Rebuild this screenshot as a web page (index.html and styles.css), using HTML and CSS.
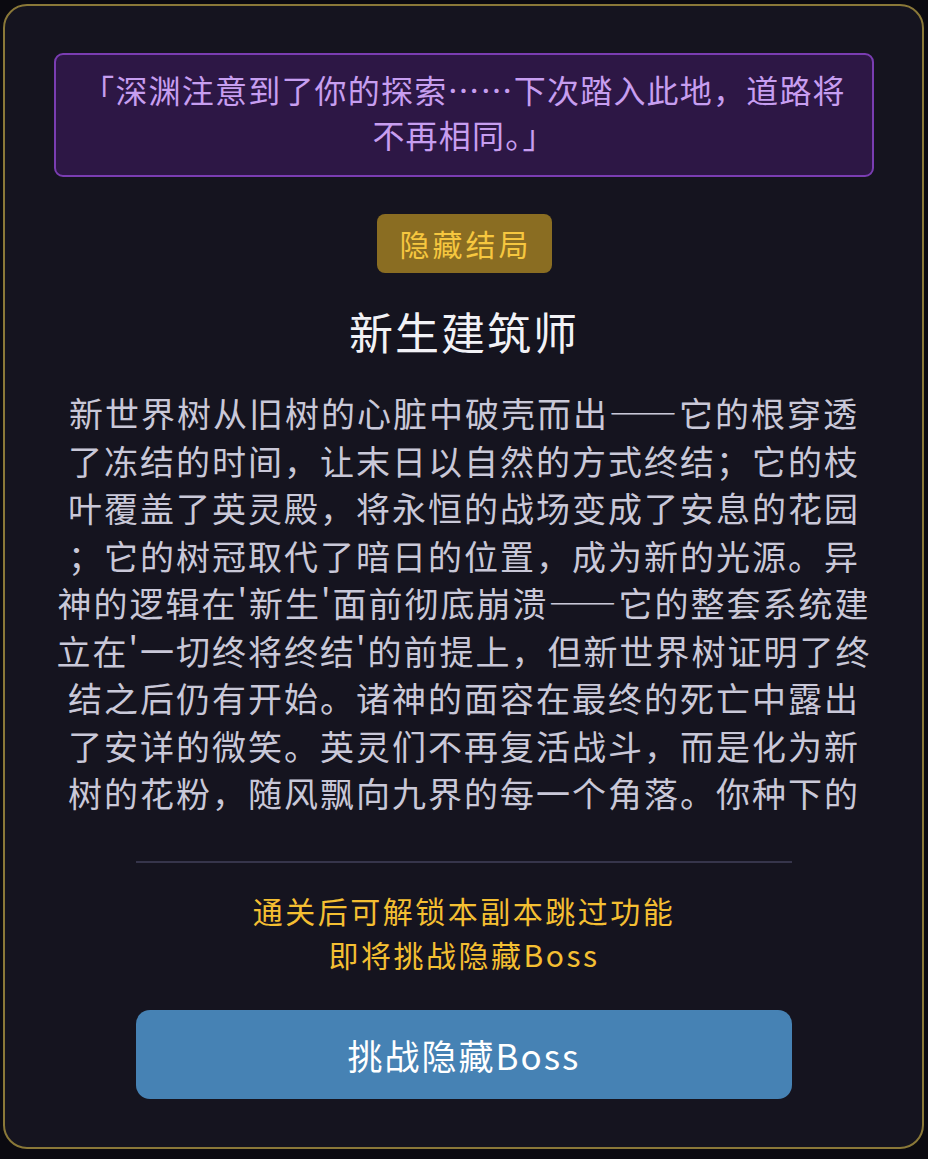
FILE: index.html
```html
<!DOCTYPE html>
<html lang="zh-CN">
<head>
  <meta charset="UTF-8">
  <title>隐藏结局 - 新生建筑师</title>
  <link rel="stylesheet" href="styles.css">
</head>
<body>
  <div class="modal">
    <div class="whisper">「深渊注意到了你的探索……下次踏入此地，道路将不再相同。」</div>

    <div class="badge">隐藏结局</div>
    <h2 class="ending-title">新生建筑师</h2>

    <div class="ending-text">新世界树从旧树的心脏中破壳而出——它的根穿透了冻结的时间，让末日以自然的方式终结；它的枝叶覆盖了英灵殿，将永恒的战场变成了安息的花园；它的树冠取代了暗日的位置，成为新的光源。异神的逻辑在'新生'面前彻底崩溃——它的整套系统建立在'一切终将终结'的前提上，但新世界树证明了终结之后仍有开始。诸神的面容在最终的死亡中露出了安详的微笑。英灵们不再复活战斗，而是化为新树的花粉，随风飘向九界的每一个角落。你种下的种子，终于长成了一个新的世界。</div>

    <hr class="divider">

    <div class="notice">
      <p>通关后可解锁本副本跳过功能</p>
      <p>即将挑战隐藏Boss</p>
    </div>

    <button class="btn-boss">挑战隐藏Boss</button>
  </div>
</body>
</html>
```

FILE: styles.css
```css
body {
  margin: 0;
  background: #0b0a10;
  font-family: "Noto Sans CJK SC", "Noto Sans", sans-serif;
}

.modal {
  box-sizing: border-box;
  height: 1145px;
  margin: 4px 4px 0 3px;
  padding: 47px 48px 0 49px;
  background: #15141f;
  border: 2px solid #8a7838;
  border-radius: 24px;
  display: flex;
  flex-direction: column;
  align-items: center;
}

.whisper {
  box-sizing: border-box;
  width: 100%;
  padding: 12px 24px 18px;
  background: #2d1745;
  border: 2px solid #7a3db2;
  border-radius: 9px;
  color: #c79ef0;
  font-size: 32px;
  letter-spacing: 1.2px;
  line-height: 45px;
  text-align: center;
}

.badge {
  margin-top: 37px;
  padding: 9px 20px 10px 23px;
  background: #8a6d22;
  color: #f6c73f;
  border-radius: 8px;
  font-size: 30px;
  letter-spacing: 3px;
  line-height: 40px;
}

.ending-title {
  margin: 27px 0 0;
  color: #f2f2f6;
  font-size: 44px;
  font-weight: normal;
  letter-spacing: 2px;
  line-height: 62px;
}

.ending-text {
  width: 100%;
  max-height: 428px;
  overflow: hidden;
  margin-top: 27px;
  color: #c9c8d8;
  font-size: 34px;
  letter-spacing: 2px;
  line-height: 47.5px;
  line-break: anywhere;
  text-align: center;
}

.divider {
  width: 80%;
  margin: 44px 0 0;
  border: none;
  border-top: 2px solid #36354b;
}

.notice {
  margin-top: 25px;
  color: #f4bf32;
  font-size: 30px;
  letter-spacing: 2.5px;
  line-height: 44px;
  text-align: center;
}

.notice p {
  margin: 0;
}

.btn-boss {
  width: 80%;
  height: 89px;
  margin-top: 34px;
  background: #4682b4;
  color: #fff;
  border: none;
  border-radius: 14px;
  font-family: inherit;
  font-size: 35px;
  letter-spacing: 2px;
  cursor: pointer;
}
```
